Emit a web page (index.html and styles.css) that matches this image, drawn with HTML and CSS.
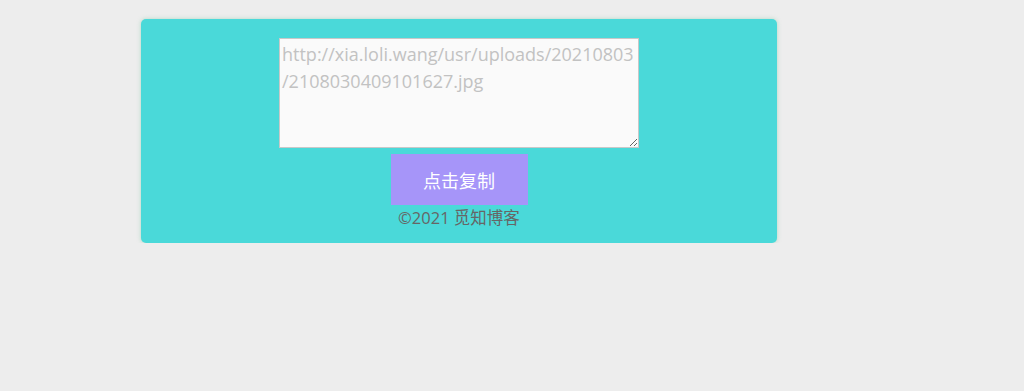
FILE: index.html
```html
<!DOCTYPE html>
<html lang="zh-CN">
<head>
<meta charset="utf-8">
<title>复制</title>
<link rel="stylesheet" href="styles.css">
</head>
<body>
<div class="wrap">
  <div class="card">
    <textarea class="url">http://xia.loli.wang/usr/uploads/20210803/2108030409101627.jpg</textarea>
    <button class="copy" type="button">点击复制</button>
    <div class="foot">©2021 觅知博客</div>
  </div>
</div>
</body>
</html>
```
FILE: styles.css
```css
html, body {
  margin: 0;
  padding: 0;
  background: #ededed;
  font-family: "Open Sans", "Noto Sans CJK SC", sans-serif;
}
.wrap {
  padding: 19px 0 0 141px;
}
.card {
  width: 636px;
  height: 224px;
  box-sizing: border-box;
  background: #4ad9d9;
  border-radius: 5px;
  box-shadow: 0 0 4px rgba(120, 200, 160, 0.5);
  display: flex;
  flex-direction: column;
  align-items: center;
  padding-top: 19px;
}
.url {
  width: 360px;
  height: 110px;
  box-sizing: border-box;
  margin: 0;
  padding: 2px;
  border: 1px solid #c8c8c8;
  background: #fafafa;
  color: #c2c2c2;
  font-family: "Open Sans", "Noto Sans CJK SC", sans-serif;
  font-size: 18px;
  line-height: 27px;
  overflow-wrap: break-word;
  resize: both;
  outline: none;
}
.copy {
  margin-top: 6px;
  width: 137px;
  height: 51px;
  border: none;
  background: #a695f9;
  color: #ffffff;
  font-family: "Noto Sans CJK SC", sans-serif;
  font-size: 18px;
  padding: 0;
}
.foot {
  margin-top: 1px;
  color: #666666;
  font-family: "Open Sans", "Noto Sans CJK SC", sans-serif;
  font-size: 16.5px;
  line-height: 24px;
}
```
